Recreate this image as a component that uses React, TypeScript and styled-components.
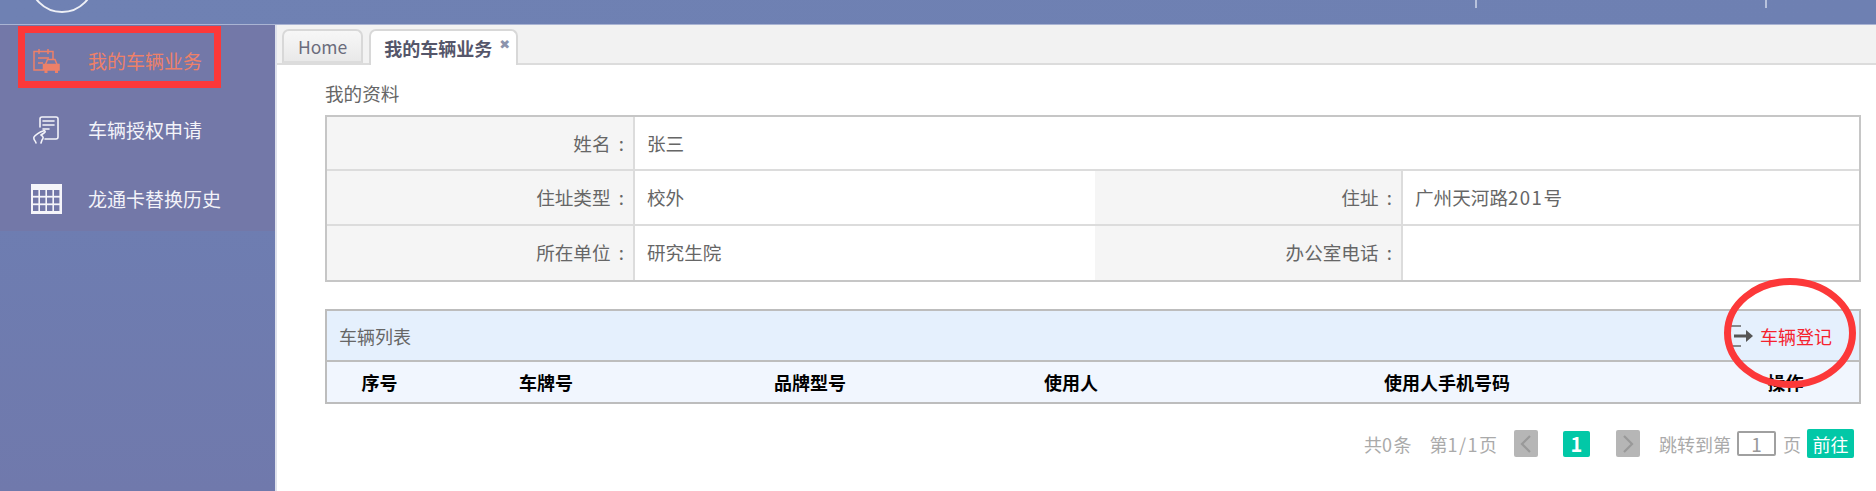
import React from "react";
import styled, { createGlobalStyle } from "styled-components";

const GlobalStyle = createGlobalStyle`
  html, body {
    margin: 0;
    padding: 0;
    background: #fff;
    overflow: hidden;
  }
  * { box-sizing: border-box; }
  body {
    font-family: "Noto Sans CJK SC", "Noto Sans", sans-serif;
    color: #666;
  }
`;

const Page = styled.div`
  position: relative;
  width: 1876px;
  height: 491px;
  display: flex;
  flex-direction: column;
  overflow: hidden;
`;

const Header = styled.header`
  height: 25px;
  flex: none;
  display: flex;
  align-items: flex-start;
  background: linear-gradient(90deg, #6f81b3, #6e80b2);
  border-bottom: 1px solid #aab4d3;
`;

const Logo = styled.svg`
  display: block;
  flex: none;
`;

const HeaderTick = styled.span<{ $gap: number }>`
  width: 2px;
  height: 8px;
  flex: none;
  background: #b8c2dc;
  margin-left: ${({ $gap }) => $gap}px;
`;

const Body = styled.div`
  flex: 1;
  display: flex;
  min-height: 0;
`;

const Sidebar = styled.aside`
  width: 275px;
  flex: none;
  background: linear-gradient(180deg, #6c80b5 0%, #7079ac 100%);
`;

const Menu = styled.nav`
  background: #7378a8;
  display: flex;
  flex-direction: column;
  padding-top: 1px;
  height: 206px;
`;

const MenuItem = styled.div<{ $active?: boolean }>`
  height: 69px;
  flex: none;
  display: flex;
  align-items: center;
  font-size: 19px;
  color: ${({ $active }) => ($active ? "#ee8068" : "#f3f3f9")};
`;

const MenuIcon = styled.span`
  width: 88px;
  flex: none;
  display: flex;
  justify-content: center;
  padding-left: 4px;
`;

const Main = styled.main`
  flex: 1;
  min-width: 0;
  display: flex;
  flex-direction: column;
  border-left: 2px solid #dfe2ec;
`;

const TabBar = styled.div`
  height: 40px;
  flex: none;
  display: flex;
  align-items: flex-end;
  gap: 6px;
  padding-left: 5px;
  background: #f2f2f2;
  border-bottom: 2px solid #dcdcdc;
`;

const Tab = styled.div<{ $active?: boolean }>`
  height: ${({ $active }) => ($active ? "36px" : "34px")};
  margin-bottom: ${({ $active }) => ($active ? "-2px" : "0")};
  display: flex;
  align-items: center;
  padding: ${({ $active }) => ($active ? "0 6px 0 13px" : "0 14px")};
  border: 2px solid #d8d8d8;
  border-bottom: ${({ $active }) => ($active ? "none" : "2px solid #dcdcdc")};
  border-radius: 7px 7px 0 0;
  font-size: ${({ $active }) => ($active ? "18px" : "17.5px")};
  font-weight: ${({ $active }) => ($active ? 700 : 400)};
  color: ${({ $active }) => ($active ? "#55566a" : "#6b6c7c")};
  background: ${({ $active }) =>
    $active ? "#fff" : "linear-gradient(180deg, #f7f7f7, #e9e9e9)"};
`;

const TabClose = styled.span`
  font-family: "DejaVu Sans", sans-serif;
  font-size: 13px;
  line-height: 1;
  color: #8c94ad;
  margin: -8px 0 0 7px;
`;

const Content = styled.div`
  flex: 1;
  padding: 0 15px 0 48px;
`;

const SectionTitle = styled.div`
  height: 50px;
  display: flex;
  align-items: center;
  padding-top: 5px;
  font-size: 18.6px;
  color: #666;
`;

const InfoTable = styled.div`
  display: grid;
  grid-template-columns: 308px 460px 308px 1fr;
  grid-auto-rows: 54.4px;
  border: 2px solid #c6c6c6;
`;

const InfoLabel = styled.div`
  display: flex;
  align-items: center;
  justify-content: flex-end;
  padding: 0 9px 2px 0;
  font-size: 18.6px;
  background: #f5f5f5;
  border-right: 2px solid #dcdcdc;
  border-bottom: 2px solid #dcdcdc;
  white-space: pre;

  &:nth-last-child(-n + 4) {
    border-bottom: none;
  }
`;

const InfoValue = styled.div<{ $span?: number }>`
  grid-column: span ${({ $span }) => $span ?? 1};
  display: flex;
  align-items: center;
  padding: 0 0 2px 12px;
  font-size: 18.6px;
  background: #fff;
  border-bottom: 2px solid #dcdcdc;

  &:nth-last-child(-n + 4) {
    border-bottom: none;
  }
`;

const Num = styled.span`
  letter-spacing: 1.5px;
`;

const Panel = styled.section`
  margin-top: 27px;
  border: 2px solid #bdbdbd;
`;

const PanelHead = styled.div`
  height: 51px;
  display: flex;
  align-items: center;
  justify-content: space-between;
  padding: 0 27px 0 12px;
  background: #e5f0fd;
  border-bottom: 2px solid #bdbdbd;
  font-size: 18px;
  color: #666;
`;

const AddLink = styled.div`
  display: flex;
  align-items: center;
  gap: 6px;
  color: #f5222d;
  font-size: 18px;
`;

const ListHead = styled.div`
  height: 40px;
  display: grid;
  grid-template-columns: 105px 228px 300px 222px 530px 1fr;
  align-items: center;
  background: #f1f6fe;
`;

const ListHeadCell = styled.div`
  text-align: center;
  font-size: 18px;
  font-weight: 700;
  color: #000;
`;

const Pager = styled.div`
  display: flex;
  align-items: center;
  justify-content: flex-end;
  margin-top: 25px;
  padding-right: 7px;
  color: #aaa;
  font-size: 18px;
`;

const PagerText = styled.span<{ $gap: number }>`
  margin-left: ${({ $gap }) => $gap}px;
`;

const ArrowButton = styled.span<{ $gap: number }>`
  width: 24px;
  height: 27px;
  margin-left: ${({ $gap }) => $gap}px;
  display: flex;
  align-items: center;
  justify-content: center;
  background: #b6b6b6;
  border-radius: 2px;
`;

const PageNumber = styled.span<{ $gap: number }>`
  width: 27px;
  height: 26px;
  margin-left: ${({ $gap }) => $gap}px;
  display: flex;
  align-items: center;
  justify-content: center;
  background: #02c8a7;
  border-radius: 2px;
  color: #fff;
  font-size: 20px;
  font-weight: 700;
`;

const PageInput = styled.span<{ $gap: number }>`
  width: 39px;
  height: 25px;
  margin-left: ${({ $gap }) => $gap}px;
  display: flex;
  align-items: center;
  justify-content: center;
  border: 2px solid #a0a0a0;
  border-radius: 2px;
  color: #999;
  font-size: 19px;
`;

const GoButton = styled.span<{ $gap: number }>`
  width: 47px;
  height: 29px;
  margin-left: ${({ $gap }) => $gap}px;
  display: flex;
  align-items: center;
  justify-content: center;
  background: #02c8a7;
  border-radius: 2px;
  color: #fff;
  font-size: 18px;
`;

// red marks someone drew over the screenshot
const MarkBox = styled.div`
  position: absolute;
  left: 18px;
  top: 26px;
  width: 203px;
  height: 62px;
  border: 7px solid #fc3839;
`;

const MarkCircle = styled.svg`
  position: absolute;
  left: 1720px;
  top: 274px;
`;

const ClipboardCarIcon = () => (
  <svg width="27" height="26" viewBox="0 0 27 26" fill="none" stroke="#ee8068" strokeWidth="1.5">
    <path d="M10 22H1V3.5h19V11" />
    <path d="M6 1v5M15 1v5M5 10h11M5 15h5" />
    <path d="M12.5 16.5l2-5h7.5l2 5" />
    <path d="M10.5 16.5H26v5.5H10.5z" fill="#ee8068" />
    <path d="M13 22v3M23.5 22v3" strokeWidth="3" />
  </svg>
);

const HandFormIcon = () => (
  <svg width="28" height="28" viewBox="0 0 28 28" fill="none" stroke="#f3f3f9" strokeWidth="1.6" strokeLinecap="round" strokeLinejoin="round">
    <path d="M8 11V3a2 2 0 0 1 2-2h14a2 2 0 0 1 2 2v18a2 2 0 0 1-2 2H13" />
    <path d="M11 5h11M11 9h11M11 13h6" />
    <path d="M4 27c0-2-3-3-2-6 1-2 6-5 9-6 2-1 3 1 1 2l-3 2c2 1 3 3 1 5l-1 3" />
  </svg>
);

const GridIcon = () => (
  <svg width="31" height="30" viewBox="0 0 31 30">
    <rect width="31" height="30" fill="#f5f5fa" />
    {[0, 1, 2].map((r) =>
      [0, 1, 2, 3].map((c) => (
        <rect key={`${r}-${c}`} x={2 + c * 7} y={6 + r * 7.6} width="5.4" height="5.8" fill="#7378a8" />
      ))
    )}
  </svg>
);

const ExitIcon = () => (
  <svg width="25" height="22" viewBox="0 0 25 22" fill="none">
    <path d="M12 1H2a1 1 0 0 0-1 1v5M1 15v5a1 1 0 0 0 1 1h10" stroke="#666" strokeWidth="1.6" />
    <path d="M5 11h13" stroke="#555" strokeWidth="3" />
    <path d="M17 5l7 6-7 6z" fill="#555" />
  </svg>
);

const Chevron = ({ dir }: { dir: "left" | "right" }) => (
  <svg width="12" height="18" viewBox="0 0 12 18" fill="none" stroke="#999" strokeWidth="2.2">
    <path d={dir === "left" ? "M10 1L2 9l8 8" : "M2 1l8 8-8 8"} />
  </svg>
);

const menu = [
  { label: "我的车辆业务", icon: <ClipboardCarIcon />, active: true },
  { label: "车辆授权申请", icon: <HandFormIcon /> },
  { label: "龙通卡替换历史", icon: <GridIcon /> },
];

const columns = ["序号", "车牌号", "品牌型号", "使用人", "使用人手机号码", "操作"];

export default function App() {
  return (
    <>
      <GlobalStyle />
      <Page>
        <Header>
          <Logo width="110" height="14" viewBox="0 0 110 14">
            <circle cx="62" cy="-20" r="32" fill="none" stroke="#eef0f6" strokeWidth="2" />
          </Logo>
          <HeaderTick $gap={1365} />
          <HeaderTick $gap={288} />
        </Header>
        <Body>
          <Sidebar>
            <Menu>
              {menu.map((item) => (
                <MenuItem key={item.label} $active={item.active}>
                  <MenuIcon>{item.icon}</MenuIcon>
                  {item.label}
                </MenuItem>
              ))}
            </Menu>
          </Sidebar>
          <Main>
            <TabBar>
              <Tab>Home</Tab>
              <Tab $active>
                我的车辆业务
                <TabClose>✖</TabClose>
              </Tab>
            </TabBar>
            <Content>
              <SectionTitle>我的资料</SectionTitle>
              <InfoTable>
                <InfoLabel>姓名  :</InfoLabel>
                <InfoValue $span={3}>张三</InfoValue>
                <InfoLabel>住址类型  :</InfoLabel>
                <InfoValue>校外</InfoValue>
                <InfoLabel>住址  :</InfoLabel>
                <InfoValue>
                  <span>广州天河路<Num>201</Num>号</span>
                </InfoValue>
                <InfoLabel>所在单位  :</InfoLabel>
                <InfoValue>研究生院</InfoValue>
                <InfoLabel>办公室电话  :</InfoLabel>
                <InfoValue />
              </InfoTable>
              <Panel>
                <PanelHead>
                  车辆列表
                  <AddLink>
                    <ExitIcon />
                    车辆登记
                  </AddLink>
                </PanelHead>
                <ListHead>
                  {columns.map((name) => (
                    <ListHeadCell key={name}>{name}</ListHeadCell>
                  ))}
                </ListHead>
              </Panel>
              <Pager>
                <PagerText $gap={0}>共<Num>0</Num>条</PagerText>
                <PagerText $gap={18}>第<Num>1/1</Num>页</PagerText>
                <ArrowButton $gap={17}><Chevron dir="left" /></ArrowButton>
                <PageNumber $gap={25}>1</PageNumber>
                <ArrowButton $gap={26}><Chevron dir="right" /></ArrowButton>
                <PagerText $gap={19}>跳转到第</PagerText>
                <PageInput $gap={6}>1</PageInput>
                <PagerText $gap={7}>页</PagerText>
                <GoButton $gap={6}>前往</GoButton>
              </Pager>
            </Content>
          </Main>
        </Body>
        <MarkBox />
        <MarkCircle width="140" height="118" viewBox="0 0 140 118">
          <ellipse cx="70" cy="59" rx="62.5" ry="51.5" fill="none" stroke="#fc3839" strokeWidth="7" />
        </MarkCircle>
      </Page>
    </>
  );
}
